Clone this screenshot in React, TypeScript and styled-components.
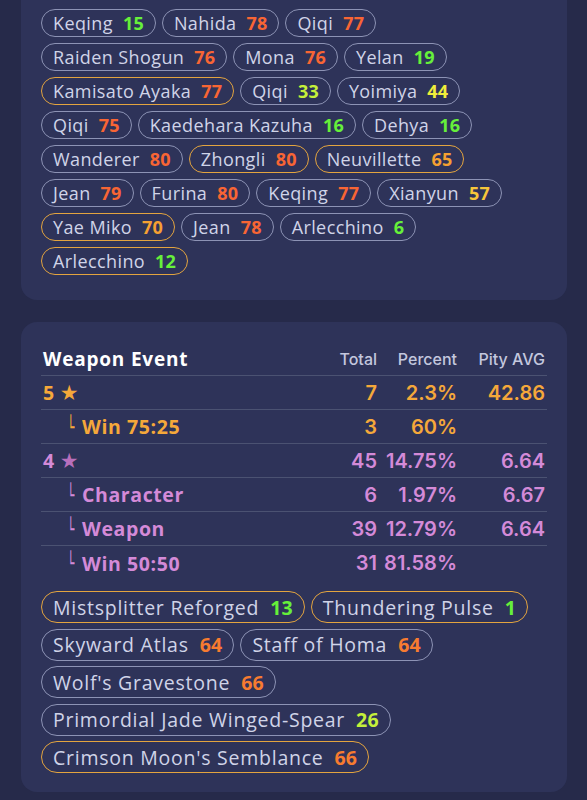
import React from 'react'
import styled, { createGlobalStyle } from 'styled-components'

const GlobalStyle = createGlobalStyle`
    body {
        margin: 0;
        background: #262a4a;
        font-family: "Open Sans", "Noto Sans", sans-serif;
    }
`

const Page = styled.div`
    display: flex;
    flex-direction: column;
    gap: 22px;
    padding: 0 20px 0 21px;
    min-height: 800px;
    box-sizing: border-box;
`

const Card = styled.section<{ $flatTop?: boolean }>`
    background: #2e3359;
    border-radius: ${p => (p.$flatTop ? '0 0 16px 16px' : '16px')};
    padding: ${p => (p.$flatTop ? '9px 20px 25px' : '20px 20px 19px')};
`

const PillList = styled.div<{ $rowGap: number }>`
    display: flex;
    flex-wrap: wrap;
    column-gap: 6px;
    row-gap: ${p => p.$rowGap}px;
`

const Pill = styled.div<{ $gold?: boolean; $big?: boolean }>`
    display: inline-flex;
    align-items: center;
    gap: ${p => (p.$big ? 11 : 10)}px;
    height: ${p => (p.$big ? 32 : 28)}px;
    padding: 0 11px;
    box-sizing: border-box;
    border: 1px solid ${p => (p.$gold ? '#e3a43f' : '#8d93b5')};
    border-radius: 999px;
    color: #d0d4e8;
    font-size: ${p => (p.$big ? 19.5 : 18)}px;
    letter-spacing: ${p => (p.$big ? 0.75 : 0.4)}px;
    white-space: nowrap;
`

const PillCount = styled.span<{ $color: string }>`
    color: ${p => p.$color};
    font-weight: 700;
    letter-spacing: 0.2px;
`

const Table = styled.div`
    display: flex;
    flex-direction: column;
`

const Row = styled.div<{ $last?: boolean }>`
    display: grid;
    grid-template-columns: 1fr 80px 80px 88px;
    align-items: center;
    height: 34px;
    border-bottom: ${p => (p.$last ? 'none' : '1px solid #4b5272')};
    box-sizing: border-box;
    color: ${p => p.color};
`

const Title = styled.div`
    color: #ffffff;
    font-size: 19px;
    font-weight: 700;
    letter-spacing: 0.8px;
    padding-left: 2px;
`

const HeadCell = styled.div`
    color: #c3c7de;
    font-family: Inter, "Noto Sans", sans-serif;
    font-size: 16px;
    font-weight: 500;
    text-align: right;
    padding-right: 2px;
`

const Label = styled.div<{ $indent?: boolean }>`
    display: flex;
    align-items: center;
    font-size: 19.5px;
    font-weight: 700;
    letter-spacing: 0.6px;
    padding-left: ${p => (p.$indent ? '26px' : '2px')};
`

const Branch = styled.span`
    display: inline-block;
    width: 7px;
    margin-right: 8px;
    font-family: "DejaVu Sans", sans-serif;
    font-weight: 400;
    font-size: 22px;
    line-height: 1;
    letter-spacing: 0;
    transform: scaleX(0.55);
    transform-origin: left center;
    position: relative;
    top: 1px;
`

const Star = styled.span<{ $color: string }>`
    color: ${p => p.$color};
    margin-left: 5px;
    font-family: "DejaVu Sans", sans-serif;
    font-size: 21px;
`

const Value = styled.div`
    font-family: Inter, "Noto Sans", sans-serif;
    font-size: 20px;
    font-weight: 600;
    text-align: right;
    padding-right: 2px;
`

const WeaponPills = styled.div`
    margin-top: 11px;
`

const GREEN = '#66f03a'
const LIME = '#c4f03a'
const YELLOW = '#f0ee3a'
const GOLD = '#f7c63a'
const AMBER = '#f5a032'
const ORANGE = '#f77b30'
const RED = '#f86534'

const characters: [string, number, string, boolean?][] = [
    ['Keqing', 15, GREEN],
    ['Nahida', 78, RED],
    ['Qiqi', 77, RED],
    ['Raiden Shogun', 76, RED],
    ['Mona', 76, RED],
    ['Yelan', 19, GREEN],
    ['Kamisato Ayaka', 77, RED, true],
    ['Qiqi', 33, LIME],
    ['Yoimiya', 44, YELLOW],
    ['Qiqi', 75, RED],
    ['Kaedehara Kazuha', 16, GREEN],
    ['Dehya', 16, GREEN],
    ['Wanderer', 80, RED],
    ['Zhongli', 80, RED, true],
    ['Neuvillette', 65, AMBER, true],
    ['Jean', 79, RED],
    ['Furina', 80, RED],
    ['Keqing', 77, RED],
    ['Xianyun', 57, GOLD],
    ['Yae Miko', 70, AMBER, true],
    ['Jean', 78, RED],
    ['Arlecchino', 6, GREEN],
    ['Arlecchino', 12, GREEN, true],
]

const weapons: [string, number, string, boolean?][] = [
    ['Mistsplitter Reforged', 13, GREEN, true],
    ['Thundering Pulse', 1, GREEN, true],
    ['Skyward Atlas', 64, ORANGE],
    ['Staff of Homa', 64, ORANGE],
    ["Wolf's Gravestone", 66, ORANGE],
    ['Primordial Jade Winged-Spear', 26, LIME],
    ["Crimson Moon's Semblance", 66, ORANGE, true],
]

const FIVE = '#f5a83a'
const FOUR = '#d48ad8'

const rows = [
    { label: '5', star: '#f5a83a', color: FIVE, total: '7', pct: '2.3%', pity: '42.86' },
    { label: 'Win 75:25', sub: true, color: FIVE, total: '3', pct: '60%', pity: '' },
    { label: '4', star: '#b86fbc', color: FOUR, total: '45', pct: '14.75%', pity: '6.64' },
    { label: 'Character', sub: true, color: FOUR, total: '6', pct: '1.97%', pity: '6.67' },
    { label: 'Weapon', sub: true, color: FOUR, total: '39', pct: '12.79%', pity: '6.64' },
    { label: 'Win 50:50', sub: true, color: FOUR, total: '31', pct: '81.58%', pity: '' },
]

const App = () => {
    return (
        <>
            <GlobalStyle />
            <Page>
                <Card $flatTop>
                    <PillList $rowGap={6}>
                        {characters.map(([name, count, color, gold], i) => (
                            <Pill key={i} $gold={gold}>
                                {name}
                                <PillCount $color={color}>{count}</PillCount>
                            </Pill>
                        ))}
                    </PillList>
                </Card>
                <Card>
                    <Table>
                        <Row>
                            <Title>Weapon Event</Title>
                            <HeadCell>Total</HeadCell>
                            <HeadCell>Percent</HeadCell>
                            <HeadCell>Pity AVG</HeadCell>
                        </Row>
                        {rows.map((r, i) => (
                            <Row key={i} color={r.color} $last={i === rows.length - 1}>
                                <Label $indent={r.sub}>
                                    {r.sub && <Branch>└</Branch>}
                                    {r.label}
                                    {r.star && <Star $color={r.star}>★</Star>}
                                </Label>
                                <Value>{r.total}</Value>
                                <Value>{r.pct}</Value>
                                <Value>{r.pity}</Value>
                            </Row>
                        ))}
                    </Table>
                    <WeaponPills>
                        <PillList $rowGap={5.5}>
                            {weapons.map(([name, count, color, gold], i) => (
                                <Pill key={i} $gold={gold} $big>
                                    {name}
                                    <PillCount $color={color}>{count}</PillCount>
                                </Pill>
                            ))}
                        </PillList>
                    </WeaponPills>
                </Card>
            </Page>
        </>
    )
}

export default App
